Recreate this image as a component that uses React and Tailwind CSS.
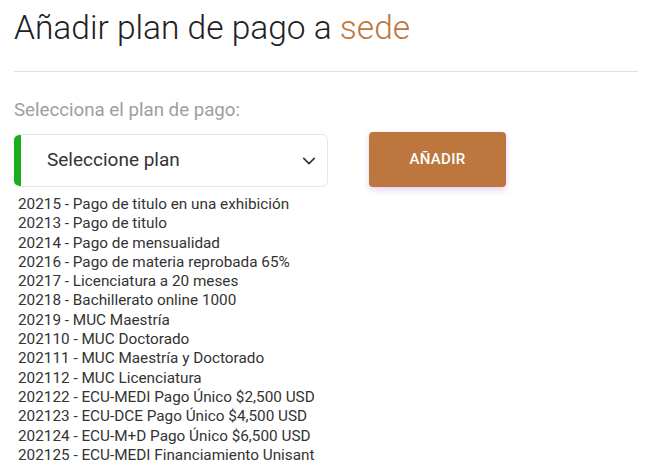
const plans = [
  '20215 - Pago de titulo en una exhibición',
  '20213 - Pago de titulo',
  '20214 - Pago de mensualidad',
  '20216 - Pago de materia reprobada 65%',
  '20217 - Licenciatura a 20 meses',
  '20218 - Bachillerato online 1000',
  '20219 - MUC Maestría',
  '202110 - MUC Doctorado',
  '202111 - MUC Maestría y Doctorado',
  '202112 - MUC Licenciatura',
  '202122 - ECU-MEDI Pago Único $2,500 USD',
  '202123 - ECU-DCE Pago Único $4,500 USD',
  '202124 - ECU-M+D Pago Único $6,500 USD',
  '202125 - ECU-MEDI Financiamiento Unisant',
];

const App = () => {
  return (
    <div className="min-h-screen bg-white font-['Roboto',sans-serif] pl-[14px] pr-[7px] pt-[6px]">
      {/* Header */}
      <h1 className="text-[33.5px] leading-[44px] font-light text-[#212121]">
        Añadir plan de pago a <span className="text-[#bd773e]">sede</span>
      </h1>
      <hr className="mt-[21px] border-t border-[#e0e0e0]" />

      <p className="mt-[26px] text-[18.7px] leading-[24px] text-[#9e9e9e]">Selecciona el plan de pago:</p>

      <div className="mt-[10px] flex items-start gap-[41px]">
        <div className="mt-[2px] flex h-[53px] w-[314px] rounded-[6px] border border-[#e6e6e6] border-l-0 overflow-hidden">
          <div className="w-[7px] bg-[#1aad1a]" />
          <div className="flex flex-1 items-center justify-between pl-[26px] pr-[11px]">
            <span className="text-[19px] text-[#333]">Seleccione plan</span>
            <svg className="w-[14px] h-[14px] text-[#343a40]" viewBox="0 0 16 16" fill="none" stroke="currentColor" strokeWidth="2" strokeLinecap="round" strokeLinejoin="round">
              <path d="M2 5l6 6 6-6" />
            </svg>
          </div>
        </div>
        <button className="h-[55px] w-[137px] rounded-[4px] bg-[#bd773e] text-white text-[15px] font-medium tracking-[0.3px] shadow-[0_3px_6px_rgba(180,120,230,0.35)]">
          AÑADIR
        </button>
      </div>

      {/* Options */}
      <ul className="mt-[8px] pl-[4px] text-[15.3px] leading-[19.3px] text-[#333]">
        {plans.map((p) => (
          <li key={p}>{p}</li>
        ))}
      </ul>
    </div>
  );
};

export default App;
